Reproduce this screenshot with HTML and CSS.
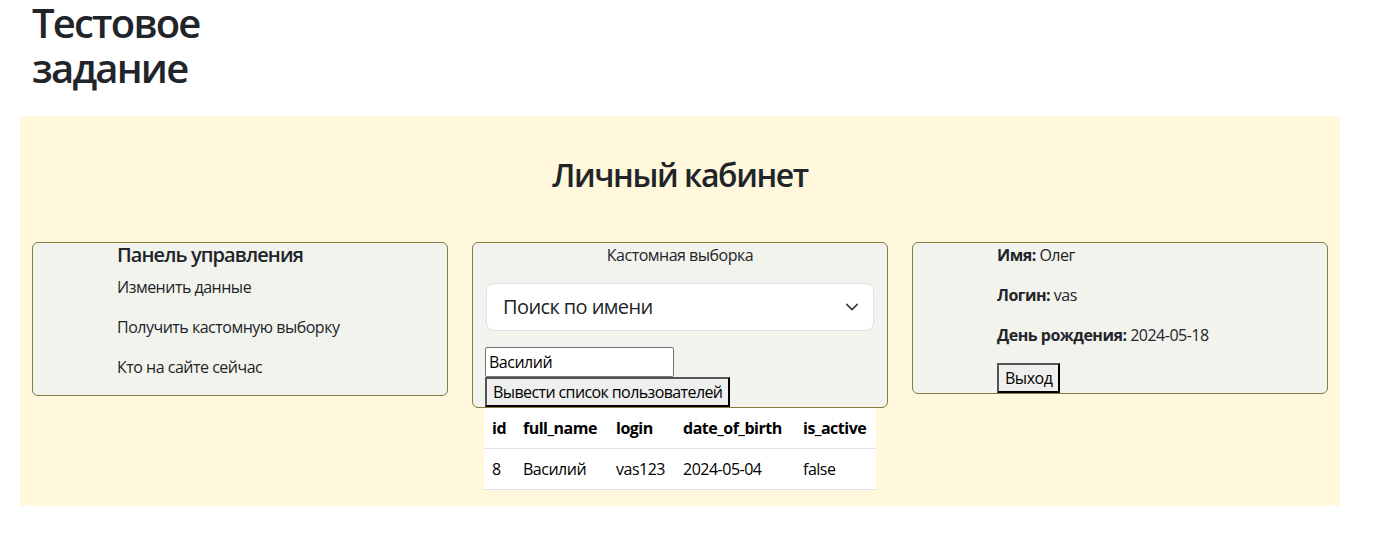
FILE: index.html
```html
<!DOCTYPE html>
<html lang="ru">
<head>
<meta charset="utf-8">
<title>Тестовое задание</title>
<link rel="stylesheet" href="styles.css">
</head>
<body>
<div class="page">
  <h1 class="title">Тестовое задание</h1>
  <section class="cabinet">
    <h2 class="cabinet-title">Личный кабинет</h2>
    <div class="cols">
      <div class="col">
        <div class="card card-menu">
          <h5 class="card-heading">Панель управления</h5>
          <p>Изменить данные</p>
          <p>Получить кастомную выборку</p>
          <p>Кто на сайте сейчас</p>
        </div>
      </div>
      <div class="col">
        <div class="card card-search">
          <p class="label">Кастомная выборка</p>
          <div class="select">
            <span>Поиск по имени</span>
            <svg class="chevron" width="14" height="14" viewBox="0 0 16 16"><path d="M2 5l6 6 6-6" fill="none" stroke="#343a40" stroke-width="1.8" stroke-linecap="round" stroke-linejoin="round"/></svg>
          </div>
          <input class="field" type="text" value="Василий">
          <button class="btn btn-wide" type="button">Вывести список пользователей</button>
        </div>
        <table class="results">
          <colgroup>
            <col class="c-id"><col class="c-name"><col class="c-login"><col class="c-date"><col class="c-active">
          </colgroup>
          <thead>
            <tr><th>id</th><th>full_name</th><th>login</th><th>date_of_birth</th><th>is_active</th></tr>
          </thead>
          <tbody>
            <tr><td>8</td><td>Василий</td><td>vas123</td><td>2024-05-04</td><td>false</td></tr>
          </tbody>
        </table>
      </div>
      <div class="col">
        <div class="card card-user">
          <p><b>Имя:</b> Олег</p>
          <p><b>Логин:</b> vas</p>
          <p><b>День рождения:</b> 2024-05-18</p>
          <button class="btn" type="button">Выход</button>
        </div>
      </div>
    </div>
  </section>
</div>
</body>
</html>
```

FILE: styles.css
```css
* { box-sizing: border-box; }

body {
  margin: 0;
  font-family: "Open Sans", "Noto Sans", sans-serif;
  font-size: 16px;
  line-height: 24px;
  letter-spacing: -0.5px;
  color: #212529;
  background: #fff;
}

.page {
  width: 1320px;
  margin-left: 20px;
}

.title {
  margin: 0;
  padding-left: 12px;
  width: 240px;
  font-size: 40px;
  font-weight: 600;
  line-height: 45px;
  letter-spacing: -1.8px;
}

.cabinet {
  margin-top: 26px;
  padding-top: 40px;
  background: #fff8dc;
}

.cabinet-title {
  margin: 0 0 48px;
  text-align: center;
  font-size: 32px;
  font-weight: 600;
  line-height: 38px;
  letter-spacing: -1.4px;
}

.cols {
  display: grid;
  grid-template-columns: repeat(3, 1fr);
  align-items: start;
}

.col {
  padding: 0 12px;
}

.card {
  background: #f3f3ee;
  border: 1px solid #857a3f;
  border-radius: 6px;
}

.card p {
  margin: 0 0 16px;
}

.card-menu,
.card-user {
  padding-left: 84px;
}

.card-heading {
  margin: 0 0 8px;
  font-size: 20px;
  font-weight: 600;
  line-height: 24px;
  letter-spacing: -0.9px;
}

.card-search {
  padding: 0 12px;
}

.card-search .label {
  text-align: center;
}

.select {
  display: flex;
  align-items: center;
  justify-content: space-between;
  height: 48px;
  margin: 0 1px 16px;
  padding: 0 14px 0 16px;
  background: #fff;
  border: 1px solid #dee2e6;
  border-radius: 8px;
  font-size: 20px;
  line-height: 30px;
  letter-spacing: -0.6px;
}

.field {
  display: block;
  width: 189px;
  height: 30px;
  margin: 0;
  padding: 1px 3px;
  border: 1px solid #767676;
  border-radius: 2px;
  background: #fff;
  font: inherit;
  letter-spacing: inherit;
  color: #000;
}

.btn {
  display: block;
  margin: 0;
  padding: 1px 6px;
  border: 2px solid;
  border-color: #555 #000 #000 #555;
  background: #efefef;
  font: inherit;
  letter-spacing: inherit;
  line-height: 24px;
  color: #000;
}

.btn-wide {
  letter-spacing: -0.6px;
}

.results {
  width: calc(100% - 24px);
  margin: 0 12px 16px;
  border-collapse: collapse;
  table-layout: fixed;
  background: #fff;
  color: #000;
}

.c-id { width: 31px; }
.c-name { width: 93px; }
.c-login { width: 67px; }
.c-date { width: 120px; }
.c-active { width: 81px; }

.results th,
.results td {
  padding: 8px;
  border-bottom: 1px solid #dee2e6;
  text-align: left;
  line-height: 24px;
  white-space: nowrap;
}

.results th {
  font-weight: 700;
}
```
